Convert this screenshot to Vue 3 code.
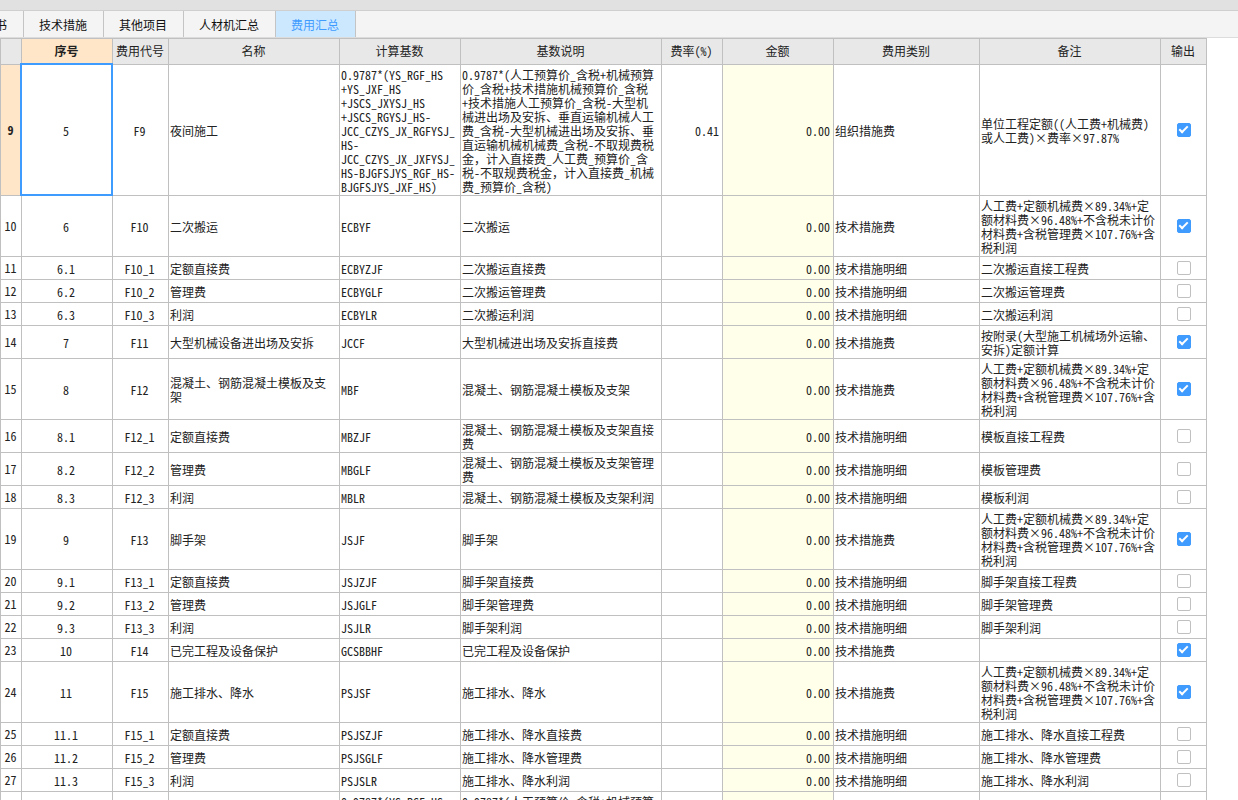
<script setup>
import { ref } from 'vue'

const tabs = ['技术措施', '其他项目', '人材机汇总', '费用汇总']
const active = ref('费用汇总')

const columns = [
  { key: 'seq', label: '序号' },
  { key: 'code', label: '费用代号' },
  { key: 'name', label: '名称' },
  { key: 'base', label: '计算基数' },
  { key: 'desc', label: '基数说明' },
  { key: 'rate', label: '费率(%)' },
  { key: 'amount', label: '金额' },
  { key: 'kind', label: '费用类别' },
  { key: 'note', label: '备注' },
  { key: 'output', label: '输出' },
]

const nightBase = `0.9787*(YS_RGF_HS
+YS_JXF_HS
+JSCS_JXYSJ_HS
+JSCS_RGYSJ_HS-
JCC_CZYS_JX_RGFYSJ_
HS-
JCC_CZYS_JX_JXFYSJ_
HS-BJGFSJYS_RGF_HS-
BJGFSJYS_JXF_HS)`
const nightDesc = `0.9787*(人工预算价_含税+机械预算
价_含税+技术措施机械预算价_含税
+技术措施人工预算价_含税-大型机
械进出场及安拆、垂直运输机械人工
费_含税-大型机械进出场及安拆、垂
直运输机械机械费_含税-不取规费税
金，计入直接费_人工费_预算价_含
税-不取规费税金，计入直接费_机械
费_预算价_含税)`
const fullNote = `人工费+定额机械费×89.34%+定
额材料费×96.48%+不含税未计价
材料费+含税管理费×107.76%+含
税利润`

const T = '技术措施费'
const D = '技术措施明细'
const row = (no, seq, code, name, base, desc, kind, note, output, rate = '') =>
  ({ no, seq, code, name, base, desc, rate, amount: '0.00', kind, note, output })

const rows = ref([
  row(9, '5', 'F9', '夜间施工', nightBase, nightDesc, '组织措施费', '单位工程定额((人工费+机械费)\n或人工费)×费率×97.87%', true, '0.41'),
  row(10, '6', 'F10', '二次搬运', 'ECBYF', '二次搬运', T, fullNote, true),
  row(11, '6.1', 'F10_1', '定额直接费', 'ECBYZJF', '二次搬运直接费', D, '二次搬运直接工程费', false),
  row(12, '6.2', 'F10_2', '管理费', 'ECBYGLF', '二次搬运管理费', D, '二次搬运管理费', false),
  row(13, '6.3', 'F10_3', '利润', 'ECBYLR', '二次搬运利润', D, '二次搬运利润', false),
  row(14, '7', 'F11', '大型机械设备进出场及安拆', 'JCCF', '大型机械进出场及安拆直接费', T, '按附录(大型施工机械场外运输、\n安拆)定额计算', true),
  row(15, '8', 'F12', '混凝土、钢筋混凝土模板及支\n架', 'MBF', '混凝土、钢筋混凝土模板及支架', T, fullNote, true),
  row(16, '8.1', 'F12_1', '定额直接费', 'MBZJF', '混凝土、钢筋混凝土模板及支架直接\n费', D, '模板直接工程费', false),
  row(17, '8.2', 'F12_2', '管理费', 'MBGLF', '混凝土、钢筋混凝土模板及支架管理\n费', D, '模板管理费', false),
  row(18, '8.3', 'F12_3', '利润', 'MBLR', '混凝土、钢筋混凝土模板及支架利润', D, '模板利润', false),
  row(19, '9', 'F13', '脚手架', 'JSJF', '脚手架', T, fullNote, true),
  row(20, '9.1', 'F13_1', '定额直接费', 'JSJZJF', '脚手架直接费', D, '脚手架直接工程费', false),
  row(21, '9.2', 'F13_2', '管理费', 'JSJGLF', '脚手架管理费', D, '脚手架管理费', false),
  row(22, '9.3', 'F13_3', '利润', 'JSJLR', '脚手架利润', D, '脚手架利润', false),
  row(23, '10', 'F14', '已完工程及设备保护', 'GCSBBHF', '已完工程及设备保护', T, '', true),
  row(24, '11', 'F15', '施工排水、降水', 'PSJSF', '施工排水、降水', T, fullNote, true),
  row(25, '11.1', 'F15_1', '定额直接费', 'PSJSZJF', '施工排水、降水直接费', D, '施工排水、降水直接工程费', false),
  row(26, '11.2', 'F15_2', '管理费', 'PSJSGLF', '施工排水、降水管理费', D, '施工排水、降水管理费', false),
  row(27, '11.3', 'F15_3', '利润', 'PSJSLR', '施工排水、降水利润', D, '施工排水、降水利润', false),
])

// Full-width commas are kept in their own run so that they stay full width.
const runs = (text) => text.split(/(，)/)
</script>

<template>
  <div class="page">
    <div class="strip"></div>
    <nav class="tabs">
      <button class="tab first" type="button">书</button>
      <button
        v-for="t in tabs"
        :key="t"
        type="button"
        class="tab"
        :class="{ active: t === active }"
        @click="active = t"
      >{{ t }}</button>
    </nav>
    <main class="sheet">
      <table>
        <colgroup>
          <col class="w-no" />
          <col v-for="c in columns" :key="c.key" :class="'w-' + c.key" />
        </colgroup>
        <thead>
          <tr>
            <th></th>
            <th v-for="c in columns" :key="c.key" scope="col" :class="{ current: c.key === 'seq' }">{{ c.label }}</th>
          </tr>
        </thead>
        <tbody>
          <tr v-for="(r, i) in rows" :key="r.no">
            <th scope="row" :class="{ current: i === 0 }">{{ r.no }}</th>
            <td v-for="c in columns" :key="c.key" :class="[c.key, { selected: i === 0 && c.key === 'seq' }]">
              <input v-if="c.key === 'output'" v-model="r.output" type="checkbox" :aria-label="'输出 ' + r.no" />
              <template v-else><span v-for="(part, n) in runs(r[c.key])" :key="n" :class="{ wide: part === '，' }">{{ part }}</span></template>
            </td>
          </tr>
          <tr>
            <th></th>
            <td v-for="c in columns" :key="c.key" :class="c.key">{{ c.key === 'base' ? nightBase : c.key === 'desc' ? nightDesc : '' }}</td>
          </tr>
        </tbody>
      </table>
    </main>
  </div>
</template>

<style>
html,
body {
  margin: 0;
  overflow: hidden;
}
</style>

<style scoped>
.page {
  display: flex;
  flex-direction: column;
  height: 100vh;
  overflow: hidden;
  background: #fff;
  color: #222;
  font-family: "Noto Sans CJK SC", sans-serif;
  font-size: 12px;
  line-height: 14px;
}
.strip {
  flex: none;
  height: 10px;
  background: #e1e1e1;
  border-bottom: 1px solid #cfcfcf;
}
.tabs {
  flex: none;
  display: flex;
  height: 26px;
  background: #f4f4f4;
  border-bottom: 1px solid #dcdcdc;
}
.tab {
  display: flex;
  align-items: center;
  justify-content: center;
  padding: 2px 16px 0 15px;
  border: 0;
  border-right: 1px solid #c4c4c4;
  background: transparent;
  color: #111;
  font: inherit;
  white-space: nowrap;
}
.tab.first {
  width: 24px;
  padding-left: 0;
  justify-content: flex-end;
  overflow: hidden;
}
.tab.active {
  background: #cce8ff;
  color: #409bff;
}
.sheet {
  flex: 1;
  min-height: 0;
  overflow: hidden;
}
table {
  width: 1207px;
  table-layout: fixed;
  border-collapse: separate;
  border-spacing: 0;
  border-top: 1px solid #c0c0c0;
  border-left: 1px solid #c0c0c0;
  font-feature-settings: "hwid";
}
.wide {
  font-feature-settings: normal;
}
.w-no { width: 21px; }
.w-seq { width: 91px; }
.w-code { width: 56px; }
.w-name { width: 171px; }
.w-base { width: 121px; }
.w-desc { width: 201px; }
.w-rate { width: 61px; }
.w-amount { width: 111px; }
.w-kind { width: 146px; }
.w-note { width: 181px; }
.w-output { width: 46px; }
th,
td {
  box-sizing: border-box;
  height: 23px;
  padding: 3px 3px 1px 1px;
  border-right: 1px solid #c0c0c0;
  border-bottom: 1px solid #c0c0c0;
  vertical-align: middle;
  text-align: left;
  white-space: pre;
}
th {
  padding: 0 1px 0 0;
  font-weight: 400;
  text-align: center;
}
thead th {
  height: 26px;
  padding-bottom: 1px;
  background: #e8e8e8;
}
th.current {
  background: #ffe6c8;
  font-weight: 700;
}
.seq,
.code {
  text-align: center;
}
.output {
  padding: 2px;
}
.rate,
.amount {
  text-align: right;
}
.amount {
  background: #ffffea;
}
.selected {
  position: relative;
}
.selected::after {
  content: "";
  position: absolute;
  inset: -2px -1px -1px -2px;
  border: 2px solid #409bff;
}
input {
  appearance: none;
  display: block;
  box-sizing: border-box;
  width: 14px;
  height: 14px;
  margin: 0 auto;
  border: 1px solid #c0c0c0;
  border-radius: 2px;
  background: #fff;
}
input:checked {
  border-color: #409bff;
  background: #409bff;
}
input:checked::after {
  content: "";
  display: block;
  box-sizing: border-box;
  width: 9px;
  height: 5px;
  margin: 2px 0 0 1px;
  border-left: 2px solid #fff;
  border-bottom: 2px solid #fff;
  transform: rotate(-45deg);
}
</style>
